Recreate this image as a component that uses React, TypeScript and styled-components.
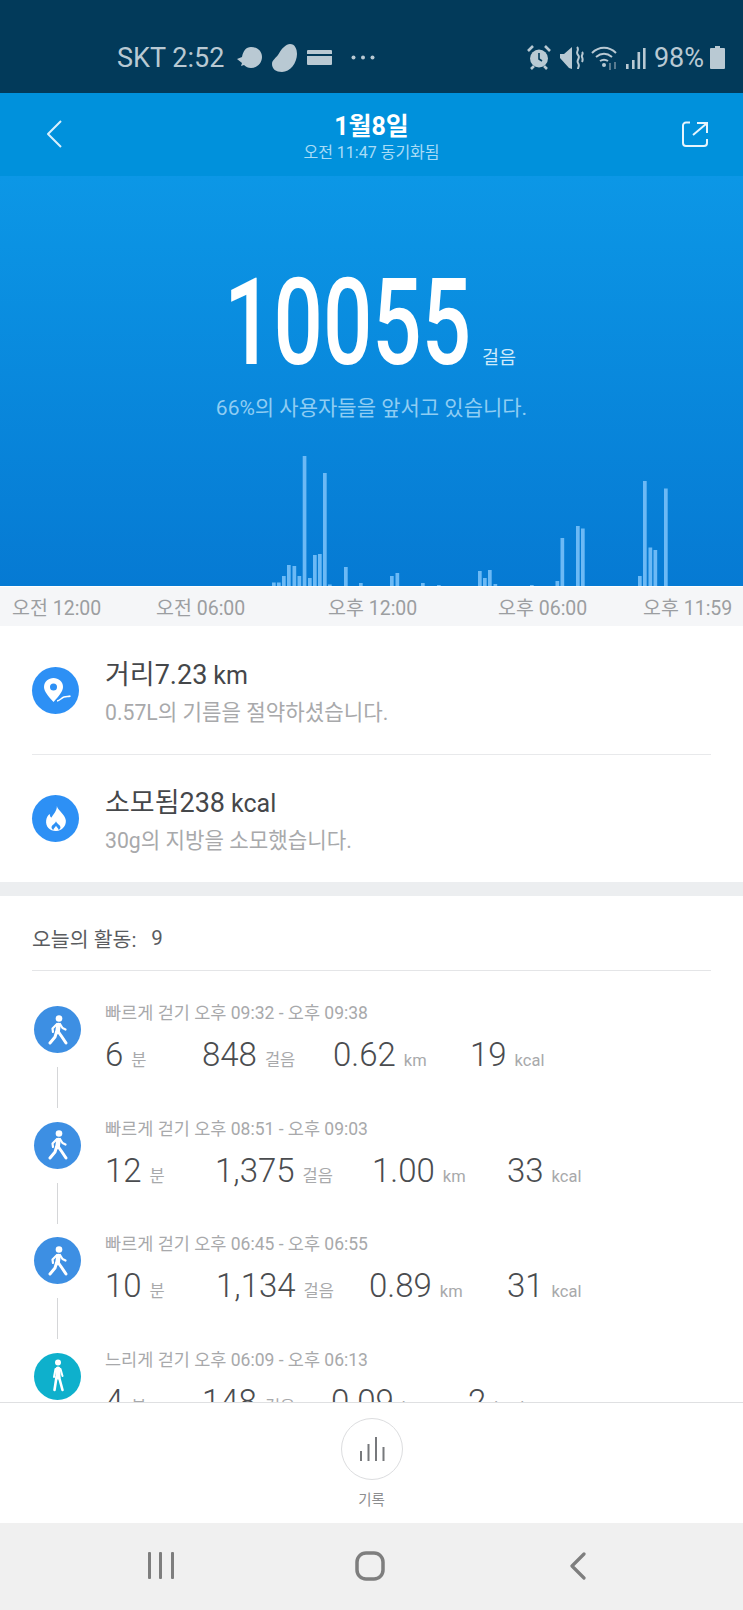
import React from 'react'
import styled, { createGlobalStyle } from 'styled-components'

const GlobalStyle = createGlobalStyle`
  html, body {
    margin: 0;
    padding: 0;
    background: #fff;
  }
  * {
    box-sizing: border-box;
  }
`

const fontStack = `Roboto, "Noto Sans CJK KR", sans-serif`

const Page = styled.div`
  width: 743px;
  height: 1610px;
  display: flex;
  flex-direction: column;
  overflow: hidden;
  font-family: ${fontStack};
  background: #fff;
`

/* status bar */
const StatusBar = styled.div`
  height: 93px;
  flex: none;
  background: #023a5a;
  color: #b9c9d3;
  display: flex;
  align-items: center;
  justify-content: space-between;
  padding: 22px 18px 0 117px;
  font-size: 27px;
`
const StatusGroup = styled.div<{ $gap?: number }>`
  display: flex;
  align-items: center;
  gap: ${p => p.$gap ?? 8}px;
`
const StatusText = styled.span<{ $ml?: number }>`
  white-space: nowrap;
  margin-left: ${p => p.$ml ?? 0}px;
`
const StatusIcon = styled.svg<{ $ml?: number }>`
  flex: none;
  margin-left: ${p => p.$ml ?? 0}px;
`

/* header */
const Header = styled.header`
  height: 83px;
  flex: none;
  background: #0091dc;
  color: #fff;
  display: grid;
  grid-template-columns: 84px 1fr 84px;
  align-items: center;
`
const HeaderIcon = styled.div<{ $right?: boolean }>`
  display: flex;
  padding-bottom: 2px;
  justify-content: ${p => (p.$right ? 'flex-end' : 'flex-start')};
  padding-left: ${p => (p.$right ? 0 : 46)}px;
  padding-right: ${p => (p.$right ? 35 : 0)}px;
`
const HeaderTitle = styled.div`
  text-align: center;
  padding-top: 6px;
`
const DateText = styled.div`
  font-size: 25px;
  line-height: 30px;
  font-weight: 700;
`
const SyncText = styled.div`
  font-size: 16px;
  line-height: 22px;
  color: #a9dcf6;
`

/* hero */
const Hero = styled.section`
  height: 410px;
  flex: none;
  background: linear-gradient(180deg, #0c97e6 0%, #067ad3 100%);
  display: flex;
  flex-direction: column;
  align-items: center;
`
const StepsRow = styled.div`
  display: flex;
  align-items: flex-end;
  margin-top: 91px;
  height: 112px;
  margin-left: -3px;
`
const StepsClip = styled.div`
  width: 244px;
  height: 112px;
`
const StepsValue = styled.div`
  font-size: 120px;
  line-height: 112px;
  font-weight: 500;
  color: #fff;
  transform: scaleX(0.725);
  transform-origin: left center;
  white-space: nowrap;
`
const StepsUnit = styled.span`
  font-size: 18.5px;
  line-height: 24px;
  color: #cfeafb;
  margin-left: 14px;
  margin-bottom: 9px;
`
const RankText = styled.div`
  margin-top: 16px;
  font-size: 21px;
  line-height: 26px;
  color: #8fcdf3;
`
const Chart = styled.svg`
  display: block;
  margin-top: auto;
`

/* time axis */
const Axis = styled.div`
  height: 40px;
  flex: none;
  background: #f5f6f8;
  border-top: 1px solid #fff;
  display: grid;
  grid-template-columns: 144px 172px 170px 145px 1fr;
  align-items: center;
  padding-left: 12px;
  color: #9c9ea1;
  font-size: 19.5px;
`
const AxisLabel = styled.span`
  white-space: nowrap;
`

/* scroll area */
const Body = styled.main`
  flex: 1;
  min-height: 0;
  overflow: hidden;
`
const StatsCard = styled.section`
  height: 256px;
  padding: 0 32px;
`
const StatRow = styled.div`
  height: 128px;
  display: flex;
  align-items: center;
  gap: 26px;
  & + & {
    border-top: 1px solid #e8e9eb;
  }
`
const StatIcon = styled.div`
  width: 47px;
  height: 47px;
  flex: none;
  border-radius: 50%;
  background: #2d90f5;
  display: flex;
  align-items: center;
  justify-content: center;
`
const PinIcon = styled.svg`
  margin-left: 4px;
`
const StatText = styled.div`
  padding-top: 4px;
`
const StatTitle = styled.div`
  font-size: 27px;
  line-height: 34px;
  color: #45474a;
`
const StatUnit = styled.span`
  margin-left: 6px;
  font-size: 25px;
`
const StatNote = styled.div`
  margin-top: 6px;
  font-size: 21.2px;
  line-height: 28px;
  color: #a8a9ab;
`
const Divider = styled.div`
  height: 14px;
  background: #eceef0;
`
const ActivityHead = styled.div`
  margin: 0 32px;
  height: 75px;
  padding-top: 9px;
  border-bottom: 1px solid #e4e5e7;
  display: flex;
  align-items: center;
  gap: 15px;
  font-size: 20.5px;
  color: #5a5c5f;
`
const ActivityList = styled.div`
  padding: 35px 32px 0 34px;
`
const ActivityRow = styled.div`
  display: flex;
  gap: 24px;
  height: 115.5px;
`
const Rail = styled.div`
  width: 47px;
  flex: none;
  display: flex;
  flex-direction: column;
  align-items: center;
`
const ActivityIcon = styled.div<{ $slow?: boolean }>`
  width: 47px;
  height: 47px;
  border-radius: 50%;
  background: ${p => (p.$slow ? '#0eb0cc' : '#3d8fe3')};
  display: flex;
  align-items: center;
  justify-content: center;
`
const RailLine = styled.div`
  width: 1px;
  height: 41px;
  margin-top: 14px;
  background: #d5d6d8;
`
const ActivityInfo = styled.div`
  flex: 1;
  margin-top: -5px;
`
const ActivityTime = styled.div`
  font-size: 17.5px;
  line-height: 24px;
  color: #a8a9ab;
  white-space: nowrap;
`
const Metrics = styled.div`
  display: flex;
  margin-top: 10px;
  white-space: nowrap;
`
const Metric = styled.div<{ $width: number }>`
  width: ${p => p.$width}px;
  flex: none;
  color: #4a4c4f;
  font-size: 33px;
  line-height: 40px;
  font-weight: 300;
`
const MetricUnit = styled.span`
  margin-left: 8px;
  font-size: 16.5px;
  font-weight: 400;
  color: #a8a9ab;
`

/* bottom tab */
const TabBar = styled.div`
  height: 121px;
  flex: none;
  border-top: 1px solid #dfe0e2;
  background: #fff;
  display: flex;
  flex-direction: column;
  align-items: center;
  padding-top: 15px;
`
const TabCircle = styled.div`
  width: 62px;
  height: 62px;
  border-radius: 50%;
  border: 1px solid #dcdddf;
  display: flex;
  align-items: center;
  justify-content: center;
`
const TabLabel = styled.div`
  margin-top: 11px;
  font-size: 14.5px;
  line-height: 20px;
  color: #8d8e90;
`

/* android nav */
const NavBar = styled.nav`
  height: 87px;
  flex: none;
  background: #f0f0f0;
  display: grid;
  grid-template-columns: 323px 96px 1fr;
  align-items: center;
  padding-bottom: 2px;
`
const NavSlot = styled.div<{ $pad?: number }>`
  display: flex;
  justify-content: flex-start;
  padding-left: ${p => p.$pad ?? 0}px;
`

// [x, height] of every bar in the steps chart
const bars: [number, number][] = [
  [272, 3.5], [277, 3.5], [282, 10], [287, 21], [292.5, 20], [297.5, 10], [302.7, 130], [308, 8],
  [313, 31], [318, 32], [323, 113], [328, 1.5], [344, 19], [359, 3], [390, 10], [395.5, 13],
  [421, 3], [437, 1], [478, 15], [483, 8], [488, 16], [493.5, 2], [530, 1], [555.5, 5],
  [560.5, 48], [576, 60], [581, 57.5], [638, 10], [643, 105], [648.5, 38.5], [653.5, 36], [664, 97.5],
]

const activities = [
  {
    slow: false,
    time: '빠르게 걷기 오후 09:32 - 오후 09:38',
    metrics: [
      { value: '6', unit: '분', width: 97 },
      { value: '848', unit: '걸음', width: 131 },
      { value: '0.62', unit: 'km', width: 137 },
      { value: '19', unit: 'kcal', width: 100 },
    ],
  },
  {
    slow: false,
    time: '빠르게 걷기 오후 08:51 - 오후 09:03',
    metrics: [
      { value: '12', unit: '분', width: 110 },
      { value: '1,375', unit: '걸음', width: 157 },
      { value: '1.00', unit: 'km', width: 135 },
      { value: '33', unit: 'kcal', width: 100 },
    ],
  },
  {
    slow: false,
    time: '빠르게 걷기 오후 06:45 - 오후 06:55',
    metrics: [
      { value: '10', unit: '분', width: 111 },
      { value: '1,134', unit: '걸음', width: 153 },
      { value: '0.89', unit: 'km', width: 138 },
      { value: '31', unit: 'kcal', width: 100 },
    ],
  },
  {
    slow: true,
    time: '느리게 걷기 오후 06:09 - 오후 06:13',
    metrics: [
      { value: '4', unit: '분', width: 97 },
      { value: '148', unit: '걸음', width: 129 },
      { value: '0.09', unit: 'km', width: 137 },
      { value: '2', unit: 'kcal', width: 100 },
    ],
  },
]

const Walker = ({ slow }: { slow: boolean }) =>
  slow ? (
    <svg width="18" height="34" viewBox="0 0 18 34" fill="none">
      <circle cx="9" cy="3.500" r="3" fill="#fff" />
      <path d="M9 10v8" stroke="#fff" strokeWidth="5" strokeLinecap="round" />
      <path d="M7.500 18l-2 13M10 18l3.500 13" stroke="#fff" strokeWidth="2.600" strokeLinecap="round" />
      <path d="M6.500 10l-1.500 8M11.500 10l2 7" stroke="#fff" strokeWidth="2" strokeLinecap="round" />
    </svg>
  ) : (
    <svg width="20" height="30" viewBox="0 0 20 30" fill="none">
      <circle cx="11" cy="3.500" r="3.300" fill="#fff" />
      <path d="M10.500 10l-1 7" stroke="#fff" strokeWidth="4.600" strokeLinecap="round" />
      <path d="M8.500 17l-1.500 5-5 6" stroke="#fff" strokeWidth="3" strokeLinecap="round" strokeLinejoin="round" />
      <path d="M10.500 17l3.500 5 4 6" stroke="#fff" strokeWidth="3" strokeLinecap="round" strokeLinejoin="round" />
      <path d="M9 9l-4.500 4.500.5 3.500M12 9l2.500 4 3 1.500" stroke="#fff" strokeWidth="2.200" strokeLinecap="round" strokeLinejoin="round" />
    </svg>
  )

export default function App() {
  return (
    <Page>
      <GlobalStyle />
      <StatusBar>
        <StatusGroup $gap={10}>
          <StatusText>SKT 2:52</StatusText>
          <StatusIcon $ml={3} width="25" height="22" viewBox="0 0 25 22">
            <path d="M14 0c6 0 11 4 11 10s-5 11-11 11c-3 0-5-1-7-3l-3 1 1-3-5-4 5-2C6 4 9 0 14 0z" fill="#b9c9d3" />
          </StatusIcon>
          <StatusIcon width="25" height="28" viewBox="0 0 25 28">
            <path d="M18 0c5 0 7 5 7 10 0 9-7 18-15 18-6 0-10-3-10-8 0-4 4-6 6-9s3-6 6-8c2-2 4-3 6-3z" fill="#b9c9d3" />
          </StatusIcon>
          <StatusIcon width="25" height="15" viewBox="0 0 25 15">
            <path d="M1 0h23a1 1 0 011 1v3H0V1a1 1 0 011-1zM0 6h25v8a1 1 0 01-1 1H1a1 1 0 01-1-1z" fill="#b9c9d3" />
          </StatusIcon>
          <StatusIcon $ml={9} width="24" height="5" viewBox="0 0 24 5">
            <circle cx="2.500" cy="2.500" r="2" fill="#b9c9d3" />
            <circle cx="12" cy="2.500" r="2" fill="#b9c9d3" />
            <circle cx="21.500" cy="2.500" r="2" fill="#b9c9d3" />
          </StatusIcon>
        </StatusGroup>
        <StatusGroup $gap={7}>
          <StatusIcon width="24" height="25" viewBox="0 0 24 25" fill="none">
            <circle cx="12" cy="13.500" r="9" fill="#b9c9d3" />
            <path d="M12 8v6l3 2" stroke="#023a5a" strokeWidth="1.600" />
            <path d="M1 6l5-5M23 6l-5-5M4 24l3-3M20 24l-3-3" stroke="#b9c9d3" strokeWidth="2.600" />
          </StatusIcon>
          <StatusIcon $ml={2} width="24" height="26" viewBox="0 0 24 26" fill="none">
            <path d="M0 9h4l8-7v22l-3-1L0 13z" fill="#b9c9d3" />
            <path d="M17 2c3 3-2 5 1 8s-2 5 0 8 0 4 0 6M22 7c2 2-1 3 0 5s1 3 0 5" stroke="#b9c9d3" strokeWidth="2" />
          </StatusIcon>
          <StatusIcon width="27" height="26" viewBox="0 0 27 26" fill="none">
            <path d="M1 8c7-7 17-7 24 0M5 12c5-4 11-4 16 0M9 16c3-2 5-2 8 0" stroke="#b9c9d3" strokeWidth="2" />
            <circle cx="13" cy="20" r="2" fill="#b9c9d3" />
            <path d="M19 18v7M24 17v7" stroke="#6f8b9d" strokeWidth="1.600" />
          </StatusIcon>
          <StatusIcon $ml={1} width="20" height="24" viewBox="0 0 20 24">
            <rect x="0" y="18" width="2.600" height="5" fill="#b9c9d3" />
            <rect x="6" y="14" width="2.600" height="9" fill="#b9c9d3" />
            <rect x="11.500" y="6" width="2.600" height="17" fill="#b9c9d3" />
            <rect x="17" y="2" width="2.600" height="21" fill="#b9c9d3" />
          </StatusIcon>
          <StatusText $ml={1}>98%</StatusText>
          <StatusIcon $ml={-1} width="15" height="23" viewBox="0 0 15 23">
            <path d="M5 0h5v2h4a1 1 0 011 1v19a1 1 0 01-1 1H1a1 1 0 01-1-1V3a1 1 0 011-1h4z" fill="#b9c9d3" />
          </StatusIcon>
        </StatusGroup>
      </StatusBar>

      <Header>
        <HeaderIcon>
          <svg width="16" height="30" viewBox="0 0 16 30" fill="none">
            <path d="M15 2L2 15l13 13" stroke="#d8f0fc" strokeWidth="2" strokeLinejoin="round" />
          </svg>
        </HeaderIcon>
        <HeaderTitle>
          <DateText>1월8일</DateText>
          <SyncText>오전 11:47 동기화됨</SyncText>
        </HeaderTitle>
        <HeaderIcon $right>
          <svg width="26" height="26" viewBox="0 0 26 26" fill="none">
            <path d="M8 1.500H4a3 3 0 00-3 3V22a3 3 0 003 3h18a3 3 0 003-3v-4" stroke="#e6f5fd" strokeWidth="2" />
            <path d="M11 14L24 3M15 2h10v10" stroke="#e6f5fd" strokeWidth="2" />
          </svg>
        </HeaderIcon>
      </Header>

      <Hero>
        <StepsRow>
          <StepsClip>
            <StepsValue>10055</StepsValue>
          </StepsClip>
          <StepsUnit>걸음</StepsUnit>
        </StepsRow>
        <RankText>66%의 사용자들을 앞서고 있습니다.</RankText>
        <Chart width="743" height="135" viewBox="0 0 743 135">
          {bars.map(([x, h]) => (
            <rect key={x} x={x} y={135 - h} width="3.700" height={h} fill="#6cb9f5" />
          ))}
        </Chart>
      </Hero>

      <Axis>
        <AxisLabel>오전 12:00</AxisLabel>
        <AxisLabel>오전 06:00</AxisLabel>
        <AxisLabel>오후 12:00</AxisLabel>
        <AxisLabel>오후 06:00</AxisLabel>
        <AxisLabel>오후 11:59</AxisLabel>
      </Axis>

      <Body>
        <StatsCard>
          <StatRow>
            <StatIcon>
              <PinIcon width="27" height="25" viewBox="0 0 27 25" fill="none">
                <path fillRule="evenodd" d="M9.500 0C14.500 0 19 3.500 19 9c0 4-4 9-9.500 15C4 18 0 13 0 9 0 3.500 4.500 0 9.500 0zm0 5.500a3.500 3.500 0 100 7 3.500 3.500 0 000-7z" fill="#fff" />
                <path d="M13 23c3 0 4-3 7-4s4 0 6.500-1" stroke="#fff" strokeWidth="1.400" />
              </PinIcon>
            </StatIcon>
            <StatText>
              <StatTitle>
                거리7.23<StatUnit>km</StatUnit>
              </StatTitle>
              <StatNote>0.57L의 기름을 절약하셨습니다.</StatNote>
            </StatText>
          </StatRow>
          <StatRow>
            <StatIcon>
              <svg width="22" height="25" viewBox="0 0 24 28">
                <path fillRule="evenodd" d="M13 0c1 5 9 9 10 16 .6 6-4 12-11 12S0 23 1 16c.4-3 2-6 4-7 0 2 1 4 2 4 2-4 6-7 6-13zm-1 17c-1 3-5 4-5 7 0 1 1 2 2 3 0-2 2-3 3-5 1 2 3 3 3 5 1-1 2-2 2-3 0-3-4-4-5-7z" fill="#fff" />
              </svg>
            </StatIcon>
            <StatText>
              <StatTitle>
                소모됨238<StatUnit>kcal</StatUnit>
              </StatTitle>
              <StatNote>30g의 지방을 소모했습니다.</StatNote>
            </StatText>
          </StatRow>
        </StatsCard>
        <Divider />
        <ActivityHead>
          <span>오늘의 활동:</span>
          <span>9</span>
        </ActivityHead>
        <ActivityList>
          {activities.map((a, i) => (
            <ActivityRow key={a.time}>
              <Rail>
                <ActivityIcon $slow={a.slow}>
                  <Walker slow={a.slow} />
                </ActivityIcon>
                {i < activities.length - 1 && <RailLine />}
              </Rail>
              <ActivityInfo>
                <ActivityTime>{a.time}</ActivityTime>
                <Metrics>
                  {a.metrics.map(m => (
                    <Metric key={m.unit} $width={m.width}>
                      {m.value}
                      <MetricUnit>{m.unit}</MetricUnit>
                    </Metric>
                  ))}
                </Metrics>
              </ActivityInfo>
            </ActivityRow>
          ))}
        </ActivityList>
      </Body>

      <TabBar>
        <TabCircle>
          <svg width="26" height="24" viewBox="0 0 26 24">
            <rect x="1" y="14" width="2" height="10" fill="#77797c" />
            <rect x="8.500" y="7" width="2" height="17" fill="#77797c" />
            <rect x="16" y="0" width="2" height="24" fill="#77797c" />
            <rect x="23.500" y="10" width="2" height="14" fill="#77797c" />
          </svg>
        </TabCircle>
        <TabLabel>기록</TabLabel>
      </TabBar>

      <NavBar>
        <NavSlot $pad={147}>
          <svg width="28" height="27" viewBox="0 0 28 27">
            <rect x="1" y="0" width="3" height="27" rx="1" fill="#7e7e7e" />
            <rect x="12" y="0" width="3" height="27" rx="1" fill="#7e7e7e" />
            <rect x="24" y="0" width="3" height="27" rx="1" fill="#7e7e7e" />
          </svg>
        </NavSlot>
        <NavSlot $pad={32}>
          <svg width="30" height="30" viewBox="0 0 30 30" fill="none">
            <rect x="2" y="2" width="26" height="26" rx="9" stroke="#7e7e7e" strokeWidth="3.500" />
          </svg>
        </NavSlot>
        <NavSlot $pad={150}>
          <svg width="18" height="28" viewBox="0 0 18 28" fill="none">
            <path d="M15 2L3 14l12 12" stroke="#7e7e7e" strokeWidth="3.200" strokeLinecap="round" strokeLinejoin="round" />
          </svg>
        </NavSlot>
      </NavBar>
    </Page>
  )
}
